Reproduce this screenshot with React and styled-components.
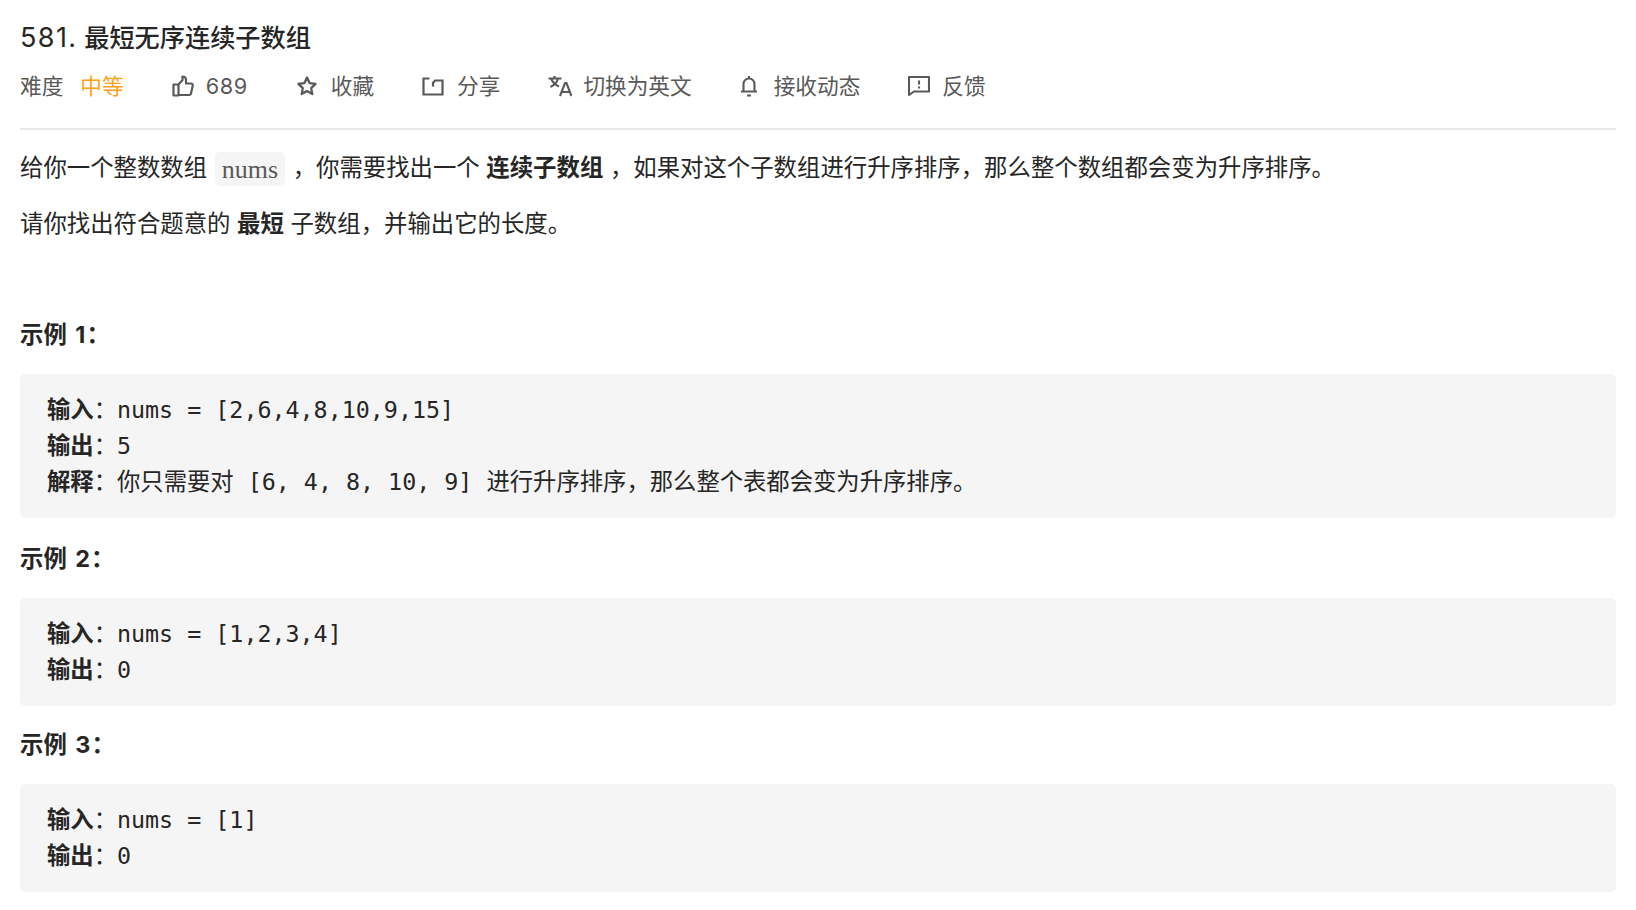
import React from "react";
import styled, { createGlobalStyle } from "styled-components";

const sans = `Inter, "Noto Sans CJK SC", sans-serif`;
const mono = `"DejaVu Sans Mono", "Noto Sans CJK SC", monospace`;

const GlobalStyle = createGlobalStyle`
  html, body {
    margin: 0;
    background: #fff;
  }
  body {
    font-family: ${sans};
    color: #262626;
  }
`;

const Page = styled.main`
  padding: 19px 20px 0;
`;

const Title = styled.h4`
  margin: 0;
  font-size: 25.2px;
  line-height: 39px;
  font-weight: 500;
  color: #262626;
`;

const TitleNumber = styled.span`
  font-size: 27px;
  line-height: 1;
  font-weight: 400;
  letter-spacing: 1.4px;
`;

const Meta = styled.div`
  display: flex;
  align-items: center;
  height: 34px;
  margin-top: 3px;
  padding: 8px 0 25px;
  gap: 48px;
  color: #595959;
  font-size: 21.67px;
  border-bottom: 2px solid #e8e8e8;
`;

const MetaItem = styled.span`
  display: inline-flex;
  align-items: center;
  gap: ${(p) => p.$gap || 13}px;
  line-height: 34px;
  white-space: nowrap;
`;

const Difficulty = styled.span`
  color: #ffa116;
`;

const Count = styled.span`
  letter-spacing: 0.6px;
`;

const Paragraph = styled.p`
  margin: ${(p) => p.$top || 0}px 0 0;
  font-size: 23.4px;
  line-height: 38px;
  color: #262626;
`;

const InlineCode = styled.code`
  font-family: "Liberation Serif", "Noto Sans CJK SC", serif;
  font-size: 26px;
  line-height: 1;
  color: #595959;
  background: #f5f5f5;
  border-radius: 5px;
  padding: 3px 7px 2px;
  margin: 0 1px;
  vertical-align: -2px;
`;

const ExampleTitle = styled.p`
  margin: ${(p) => p.$top}px 0 0;
  font-size: 23.4px;
  line-height: 38px;
  font-weight: 700;
  color: #262626;
`;

const ExampleNumber = styled.span`
  margin: 0 1px 0 3px;
`;

const CodeBlock = styled.pre`
  margin: 20px 0 0;
  padding: 18px 27px;
  background: #f5f5f5;
  border-radius: 5px;
  font-family: ${mono};
  font-size: 23.33px;
  line-height: 36px;
  color: #262626;
  white-space: pre-wrap;

  strong {
    font-weight: 700;
  }
`;

const Icon = styled.svg`
  display: block;
  flex: none;
  fill: none;
  stroke: #595959;
  stroke-width: ${(p) => p.$weight || 2};
`;

const ThumbIcon = () => (
  <Icon width="22" height="22" viewBox="0 0 22 22" $weight={2.2}>
    <path d="M1.500 9.500h5v11h-5zM6.500 9.500l4-4.500V1.500c2 0 3.500 1.500 3.500 3.500v3.500h5c1.200 0 2 1 1.700 2.200l-1.700 7.800c-.2 1-1 1.500-2 1.500H6.500" strokeLinejoin="round" />
  </Icon>
);

const StarIcon = () => (
  <Icon width="22" height="22" viewBox="0 0 22 22" $weight={2.3}>
    <path d="M11 2.500l2.600 5.600 6 .8-4.400 4.200 1.100 6-5.300-3-5.300 3 1.100-6-4.400-4.200 6-.8z" strokeLinejoin="round" />
  </Icon>
);

const ShareIcon = () => (
  <Icon width="22" height="22" viewBox="0 0 22 22" $weight={2.2}>
    <path d="M7.500 3.500H1.500v16h19V5.500H13l-2 2.500v3.500" />
  </Icon>
);

const TranslateIcon = () => (
  <Icon width="24" height="22" viewBox="0 0 24 22" $weight={2.1}>
    <path d="M.5 3.500h13M6.500 1v2.500M2.500 12c4-2 6.500-5 7.500-8.500M3 3.500c1.500 3.500 4.500 6.500 8 8M12 21l5-13h1.500l5 13M14 17h8" />
  </Icon>
);

const BellIcon = () => (
  <Icon width="18" height="22" viewBox="0 0 18 22" $weight={2.1}>
    <path d="M3.500 16V9c0-3 2.300-5.500 5.500-5.500S14.500 6 14.500 9v7M1 16.500h16M9 1v2.500M7 20.500h4" />
  </Icon>
);

const FeedbackIcon = () => (
  <Icon width="22" height="22" viewBox="0 0 22 22" $weight={2.1}>
    <path d="M1 2h20v14.500H6L1 20z" strokeLinejoin="round" />
    <path d="M11 5.500v4M11 11.500v2" />
  </Icon>
);

export default function App() {
  return (
    <Page>
      <GlobalStyle />
      <Title><TitleNumber>581.</TitleNumber> 最短无序连续子数组</Title>
      <Meta>
        <MetaItem $gap={17}>
          难度 <Difficulty>中等</Difficulty>
        </MetaItem>
        <MetaItem $gap={12}><ThumbIcon /><Count>689</Count></MetaItem>
        <MetaItem><StarIcon />收藏</MetaItem>
        <MetaItem><ShareIcon />分享</MetaItem>
        <MetaItem $gap={11}><TranslateIcon />切换为英文</MetaItem>
        <MetaItem $gap={16}><BellIcon />接收动态</MetaItem>
        <MetaItem $gap={12}><FeedbackIcon />反馈</MetaItem>
      </Meta>

      <Paragraph $top={19}>
        给你一个整数数组 <InlineCode>nums</InlineCode> ，你需要找出一个 <strong>连续子数组</strong> ，如果对这个子数组进行升序排序，那么整个数组都会变为升序排序。
      </Paragraph>
      <Paragraph $top={18}>
        请你找出符合题意的 <strong>最短</strong> 子数组，并输出它的长度。
      </Paragraph>

      <ExampleTitle $top={73}>示例 <ExampleNumber>1</ExampleNumber>：</ExampleTitle>
      <CodeBlock>
        <strong>输入</strong>：nums = [2,6,4,8,10,9,15]{"\n"}
        <strong>输出</strong>：5{"\n"}
        <strong>解释</strong>：你只需要对 [6, 4, 8, 10, 9] 进行升序排序，那么整个表都会变为升序排序。
      </CodeBlock>

      <ExampleTitle $top={22}>示例 <ExampleNumber>2</ExampleNumber>：</ExampleTitle>
      <CodeBlock>
        <strong>输入</strong>：nums = [1,2,3,4]{"\n"}
        <strong>输出</strong>：0
      </CodeBlock>

      <ExampleTitle $top={20}>示例 <ExampleNumber>3</ExampleNumber>：</ExampleTitle>
      <CodeBlock>
        <strong>输入</strong>：nums = [1]{"\n"}
        <strong>输出</strong>：0
      </CodeBlock>
    </Page>
  );
}
